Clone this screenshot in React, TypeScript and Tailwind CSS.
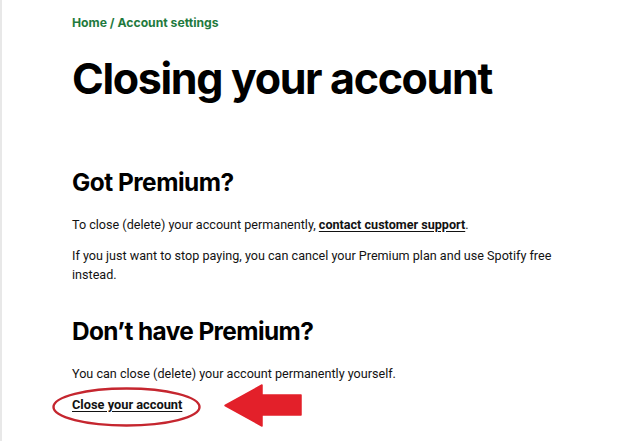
import React from "react";

export default function App() {
  const head = { fontFamily: "Inter, 'Noto Sans', sans-serif" };
  const body = { fontFamily: "Roboto, 'Noto Sans', sans-serif" };
  return (
    <div className="w-[640px] h-[441px] bg-white overflow-hidden flex">
      <div className="w-[2px] bg-[#e8e8e8]" />
      <div className="flex-1 pl-[70px] pt-[14px] text-[#121212]">
        <nav className="text-[12.2px] leading-[17px] font-bold text-[#1f7a3e]" style={head}>
          Home / Account settings
        </nav>
        <h1 className="mt-[21px] text-[43px] leading-[52px] font-bold tracking-[-1.35px] text-black" style={head}>
          Closing your account
        </h1>
        <h2 className="mt-[63px] text-[24.4px] leading-[30px] font-bold tracking-[-0.5px] text-black" style={head}>
          Got Premium?
        </h2>
        <div className="mt-[18px] max-w-[505px] text-[12.6px] leading-[19px] flex flex-col gap-[12px]" style={body}>
          <p>
            To close (delete) your account permanently,{" "}
            <a className="font-bold underline underline-offset-2">contact customer support</a>.
          </p>
          <p>If you just want to stop paying, you can cancel your Premium plan and use Spotify free instead.</p>
        </div>
        <h2 className="mt-[32px] text-[24.4px] leading-[30px] font-bold tracking-[-0.6px] text-black" style={head}>
          Don’t have Premium?
        </h2>
        <p className="mt-[18px] text-[12.6px] leading-[19px]" style={body}>
          You can close (delete) your account permanently yourself.
        </p>
        <div className="relative mt-[12px] flex">
          <a className="text-[12.8px] leading-[19px] font-bold underline underline-offset-2" style={body}>
            Close your account
          </a>
          <svg className="absolute left-[-21px] top-[-9px]" width="151" height="42" viewBox="0 0 151 42">
            <ellipse cx="75.5" cy="21" rx="73" ry="18.5" fill="none" stroke="#c5262f" strokeWidth="2.4" />
          </svg>
          <svg className="absolute left-[152px] top-[-11px]" width="78" height="43" viewBox="0 0 78 43">
            <path
              d="M1 21.5 L38 1 L38 11 L77 11 L77 31 L38 31 L38 42 Z"
              fill="#e3202a"
              stroke="#e3202a"
              strokeLinejoin="round"
              strokeWidth="1.5"
            />
          </svg>
        </div>
      </div>
    </div>
  );
}
